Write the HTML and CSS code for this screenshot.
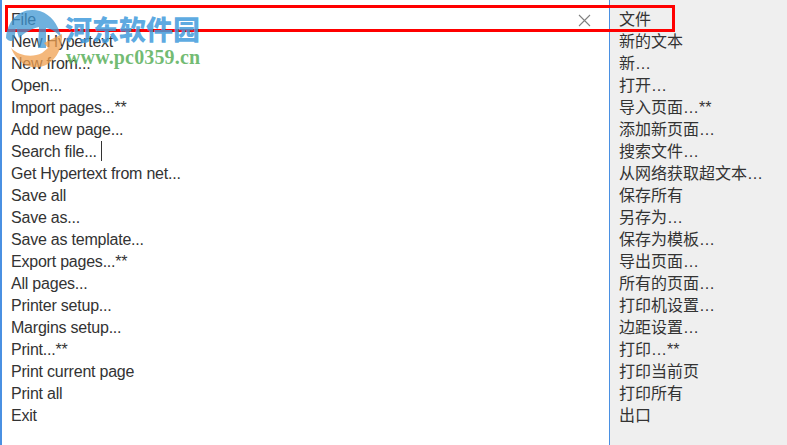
FILE: index.html
```html
<!DOCTYPE html>
<html lang="en">
<head>
<meta charset="utf-8">
<title>File</title>
<link rel="stylesheet" href="styles.css">
</head>
<body>
<div class="app">
  <div class="main">
    <div class="row head-row"><span>File</span>
      <svg class="close" width="13" height="13" viewBox="0 0 13 13"><path d="M1 1L12 12M12 1L1 12" stroke="#808080" stroke-width="1.1" fill="none"/></svg>
    </div>
    <div class="row">New Hypertext</div>
    <div class="row">New from...</div>
    <div class="row">Open...</div>
    <div class="row">Import pages...**</div>
    <div class="row">Add new page...</div>
    <div class="row">Search file...<i class="caret"></i></div>
    <div class="row">Get Hypertext from net...</div>
    <div class="row">Save all</div>
    <div class="row">Save as...</div>
    <div class="row">Save as template...</div>
    <div class="row">Export pages...**</div>
    <div class="row">All pages...</div>
    <div class="row">Printer setup...</div>
    <div class="row">Margins setup...</div>
    <div class="row">Print...**</div>
    <div class="row">Print current page</div>
    <div class="row">Print all</div>
    <div class="row">Exit</div>
  </div>
  <div class="side">
    <div class="row">文件</div>
    <div class="row">新的文本</div>
    <div class="row">新…</div>
    <div class="row">打开…</div>
    <div class="row">导入页面…**</div>
    <div class="row">添加新页面…</div>
    <div class="row">搜索文件…</div>
    <div class="row">从网络获取超文本…</div>
    <div class="row">保存所有</div>
    <div class="row">另存为…</div>
    <div class="row">保存为模板…</div>
    <div class="row">导出页面…</div>
    <div class="row">所有的页面…</div>
    <div class="row">打印机设置…</div>
    <div class="row">边距设置…</div>
    <div class="row">打印…**</div>
    <div class="row">打印当前页</div>
    <div class="row">打印所有</div>
    <div class="row">出口</div>
  </div>
</div>
<div class="highlight"></div>
<div class="mark">
  <svg class="mark-logo" width="64" height="62" viewBox="0 0 64 62">
    <path class="logo-blue" d="M6 30C7 14 18 2 32 2C44 2 53 9 58 20L62 30C56 24 52 21 46 20L46 40L38 40L39 19C31 21 24 25 19 30L16 20L14 32C11 34 8 33 6 30Z"/>
    <path class="logo-orange" d="M11 40C19 48 32 50 42 45L48 40L44 35L62 26C63 42 54 56 40 59C27 61 17 54 11 40Z"/>
  </svg>
  <div class="mark-title">河东软件园</div>
  <div class="mark-url">www.pc0359.cn</div>
</div>
</body>
</html>
```
FILE: styles.css
```css
* { box-sizing: border-box; }
html, body { margin: 0; padding: 0; }
body {
  width: 787px;
  height: 445px;
  overflow: hidden;
  position: relative;
  background: #fff;
  font-family: "Liberation Sans", Arial, "Noto Sans CJK SC", sans-serif;
  font-size: 16px;
  color: #333;
}
.app {
  display: flex;
  height: 445px;
  border-left: 2px solid #4a90e2;
}
.main {
  width: 608px;
  padding: 9px 0 0 9px;
  border-right: 1px solid #4a90e2;
  flex: none;
  letter-spacing: -0.22px;
}
.side {
  flex: 1;
  padding: 9px 0 0 9px;
  background: #efefef;
}
.row {
  height: 22px;
  line-height: 22px;
  white-space: nowrap;
}
.head-row {
  display: flex;
  justify-content: space-between;
  align-items: center;
  padding-right: 18px;
}
.caret {
  display: inline-block;
  width: 1px;
  height: 20px;
  margin-left: 4px;
  background: #333;
  vertical-align: -4px;
}
.highlight {
  position: absolute;
  left: 5px;
  top: 5px;
  width: 670px;
  height: 27px;
  border: 3px solid #f00;
}
.mark { position: absolute; left: 0; top: 0; width: 210px; height: 72px; }
.mark-logo { position: absolute; left: 0; top: 8px; }
.logo-blue { fill: rgba(63, 151, 211, .75); }
.logo-orange { fill: rgba(240, 160, 80, .75); }
.mark-title {
  position: absolute;
  left: 65px;
  top: 12px;
  font-family: "Noto Sans CJK SC", sans-serif;
  font-weight: 900;
  font-size: 27px;
  line-height: 34px;
  white-space: nowrap;
  color: rgba(65, 155, 220, .85);
}
.mark-url {
  position: absolute;
  left: 66px;
  top: 47px;
  font-family: "Liberation Serif", serif;
  font-weight: 700;
  font-size: 20px;
  letter-spacing: .15px;
  line-height: 20px;
  white-space: nowrap;
  color: rgba(90, 175, 90, .85);
}
```
